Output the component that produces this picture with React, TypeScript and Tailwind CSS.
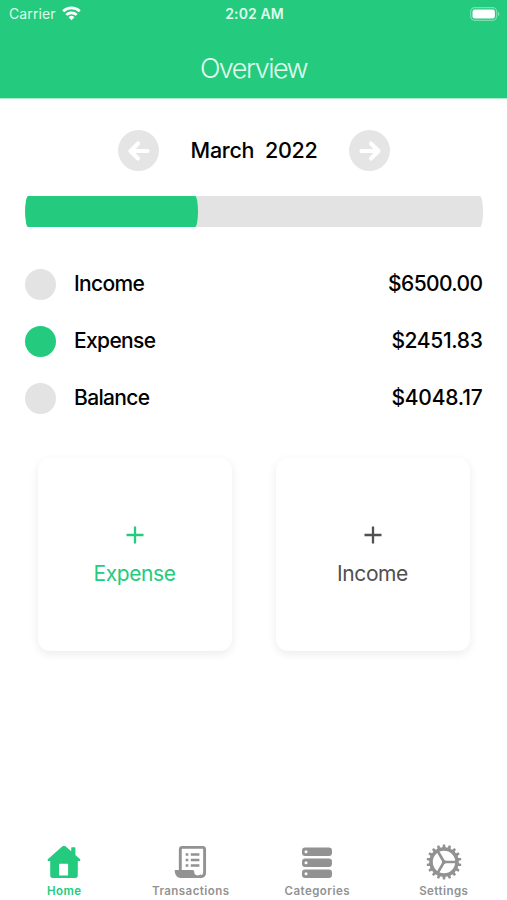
import { useState } from "react";
import type { ReactNode } from "react";

type TabId = "home" | "transactions" | "categories" | "settings";

interface SummaryRow {
  label: string;
  amount: number;
  dot: string;
  value: string;
}

const ROWS: SummaryRow[] = [
  { label: "Income", amount: 6500, dot: "bg-[#e3e3e4]", value: "tracking-[-0.6px]" },
  { label: "Expense", amount: 2451.83, dot: "bg-[#24cb7e]", value: "tracking-[-0.35px]" },
  { label: "Balance", amount: 4048.17, dot: "bg-[#e3e3e4]", value: "tracking-[-0.2px]" },
];

const ACTIONS = [
  { label: "Expense", color: "text-[#24cb7e]" },
  { label: "Income", color: "text-[#505050]" },
];

const GEAR_TEETH = Array.from({ length: 18 }, (_, i) => i * 20);

function HomeIcon() {
  return (
    <svg width="34" height="34" viewBox="0 0 34 34" fill="currentColor">
      <path
        fillRule="evenodd"
        d="M15.2 1.6a2.6 2.6 0 0 1 3.6 0l5.4 4.7V3.2c0-.6.4-1 1-1h2.2c.6 0 1 .4 1 1v6.9l4.5 4c.9.8.4 2-.7 2h-1.400v14.100c0 1.800-1.100 2.900-2.900 2.900H6.100c-1.800 0-2.900-1.100-2.900-2.900V16.100H1.800c-1.100 0-1.600-1.200-.7-2zM13.100 18.800c-.6 0-1 .4-1 1V29.500c0 .6.4 1 1 1h7c.6 0 1-.4 1-1v-9.700c0-.6-.4-1-1-1z"
      />
    </svg>
  );
}

function TransactionsIcon() {
  return (
    <svg width="34" height="34" viewBox="0 0 34 34" fill="none" stroke="currentColor">
      <path
        d="M6.300 25.500V4.400a2 2 0 0 1 2-2h20.300a2 2 0 0 1 2 2v23.100c0 2.700-1.800 4.200-4.500 4.200"
        strokeWidth="2.900"
      />
      <path
        d="M.7 25h17.800c1.300 0 1.700.8 1.700 1.800 0 2.300 1.400 3.600 3.300 3.600 1.500 0 2.600-.5 3.200-1.400v3.400c-.4.500-1.200.7-2.200.7H7.700c-4.500 0-7-2.900-7-8.100z"
        fill="currentColor"
        stroke="none"
      />
      <path d="M11.700 9.500h2.600M11.700 15h2.600M11.700 20.500h2.600M16.800 9.500h8.600M16.800 15h8.600M16.800 20.500h8.600" strokeWidth="2.300" />
    </svg>
  );
}

function CategoriesIcon() {
  return (
    <svg width="34" height="34" viewBox="0 0 34 34" fill="currentColor">
      {[2.5, 13.5, 24.5].map((y) => (
        <g key={y}>
          <rect x="2" y={y} width="30" height="8.500" rx="3.200" />
          <circle cx="6" cy={y + 4.2} r="1.500" fill="white" />
        </g>
      ))}
    </svg>
  );
}

function SettingsIcon() {
  return (
    <svg width="36" height="36" viewBox="0 0 36 36" fill="none" stroke="currentColor">
      <circle cx="18" cy="18" r="13" strokeWidth="3.600" />
      {GEAR_TEETH.map((deg) => (
        <path key={deg} d="M16.300 4.500L16.900.6h2.200l.6 3.900z" fill="currentColor" stroke="none" transform={`rotate(${deg} 18 18)`} />
      ))}
      <path d="M18 18h12.500M18 18l-6.300-10.900M18 18l-6.300 10.900" strokeWidth="2.700" />
      <circle cx="18" cy="18" r="2" fill="currentColor" stroke="none" />
    </svg>
  );
}

const TABS: { id: TabId; label: string; icon: ReactNode }[] = [
  { id: "home", label: "Home", icon: <HomeIcon /> },
  { id: "transactions", label: "Transactions", icon: <TransactionsIcon /> },
  { id: "categories", label: "Categories", icon: <CategoriesIcon /> },
  { id: "settings", label: "Settings", icon: <SettingsIcon /> },
];

function StatusBar() {
  return (
    <div className="grid h-7 grid-cols-3 items-center pr-[7px] pl-[9px] text-[#dffbec]">
      <div className="flex items-center gap-[6px]">
        <span className="text-[14px] leading-none tracking-[0.1px]">Carrier</span>
        <svg className="-mt-[2px]" width="19" height="15" viewBox="0 0 19 15" fill="none" stroke="white" strokeWidth="2.700">
          <path d="M1.200 5.300a12 12 0 0 1 16.600 0" />
          <path d="M4.300 8.900a7.500 7.500 0 0 1 10.400 0" />
          <path d="M9.500 14.200L6.600 11.300a4.100 4.100 0 0 1 5.800 0z" fill="white" stroke="none" />
        </svg>
      </div>
      <span className="text-center text-[14px] leading-none font-semibold tracking-[0.1px]">2:02 AM</span>
      <svg className="-mt-px ml-auto" width="30" height="14" viewBox="0 0 30 14">
        <rect x=".7" y=".7" width="26" height="12.600" rx="4" fill="none" stroke="#7be0ae" strokeWidth="1.200" />
        <rect x="2.500" y="2.500" width="22.400" height="9" rx="2.300" fill="white" />
        <path d="M28 4.800c1.800.5 1.800 3.900 0 4.400z" fill="#7be0ae" />
      </svg>
    </div>
  );
}

function MonthButton({ direction }: { direction: "prev" | "next" }) {
  return (
    <button aria-label={direction} className="flex size-[41px] items-center justify-center rounded-full bg-[#e5e5e5]">
      <svg
        className={direction === "prev" ? "rotate-180" : ""}
        width="24"
        height="24"
        viewBox="0 0 24 24"
        fill="none"
        stroke="white"
        strokeWidth="4.200"
        strokeLinecap="round"
        strokeLinejoin="round"
      >
        <path d="M3.500 12h17M13 4.500l7.500 7.500-7.500 7.500" />
      </svg>
    </button>
  );
}

export default function App() {
  const [activeTab, setActiveTab] = useState<TabId>("home");
  const spent = (ROWS[1].amount / ROWS[0].amount) * 100;

  return (
    <div className="flex h-[900px] w-[507px] flex-col overflow-hidden bg-white font-['Inter',sans-serif] text-black">
      <header className="box-content h-[98px] shrink-0 border-b border-[#a9eacb] bg-[#24cb7e]">
        <StatusBar />
        <h1 className="pt-[24px] text-center text-[27px] leading-[34px] font-light tracking-[-1.5px] text-[#e0fbed]">
          Overview
        </h1>
      </header>

      <main className="flex-1">
        {/* Month picker */}
        <div className="mt-[31px] flex h-[41px] items-center justify-center gap-[31.500px] pl-px">
          <MonthButton direction="prev" />
          <span className="w-[127px] text-center text-[21.500px] font-medium tracking-[-0.3px] whitespace-pre">
            March  2022
          </span>
          <MonthButton direction="next" />
        </div>

        {/* Spent this month */}
        <div className="mt-[25px] mr-[24.500px] ml-[25px] h-[31px] overflow-hidden rounded-[3px_/_50%] bg-[#e3e3e4]">
          <div className="h-full rounded-[3px_/_50%] bg-[#24cb7e]" style={{ width: `${spent}%` }} />
        </div>

        <div className="mt-[28px] pr-[24.500px] pl-[25px]">
          {ROWS.map((row) => (
            <div key={row.label} className="flex h-[57px] items-center text-[21px] font-medium">
              <span className={`mt-px size-[31px] rounded-full ${row.dot}`} />
              <span className="ml-[18px] tracking-[-0.65px]">{row.label}</span>
              <span className={`ml-auto ${row.value}`}>${row.amount.toFixed(2)}</span>
            </div>
          ))}
        </div>

        {/* Quick add */}
        <div className="mt-[32px] flex justify-between px-[37.500px]">
          {ACTIONS.map((action) => (
            <button
              key={action.label}
              className={`flex h-[193px] w-[194px] flex-col items-center rounded-[12px] bg-white pt-[68px] shadow-[0_3px_10px_rgba(0,0,0,0.08)] ${action.color}`}
            >
              <svg width="18" height="18" viewBox="0 0 18 18" stroke="currentColor" strokeWidth="2.300">
                <path d="M9 .5v17M.5 9h17" />
              </svg>
              <span className="mt-[15px] text-[21px] leading-[30px] tracking-[-0.4px]">{action.label}</span>
            </button>
          ))}
        </div>
      </main>

      <nav className="grid h-[57px] shrink-0 grid-cols-4 pl-px">
        {TABS.map((tab) => (
          <button
            key={tab.id}
            onClick={() => setActiveTab(tab.id)}
            className={`flex flex-col items-center ${activeTab === tab.id ? "text-[#24cb7e]" : "text-[#929292]"}`}
          >
            <span className="flex h-[38px] items-center justify-center">{tab.icon}</span>
            <span className="mt-[2px] text-[11.500px] leading-[16px] font-semibold tracking-[0.45px]">{tab.label}</span>
          </button>
        ))}
      </nav>
    </div>
  );
}
